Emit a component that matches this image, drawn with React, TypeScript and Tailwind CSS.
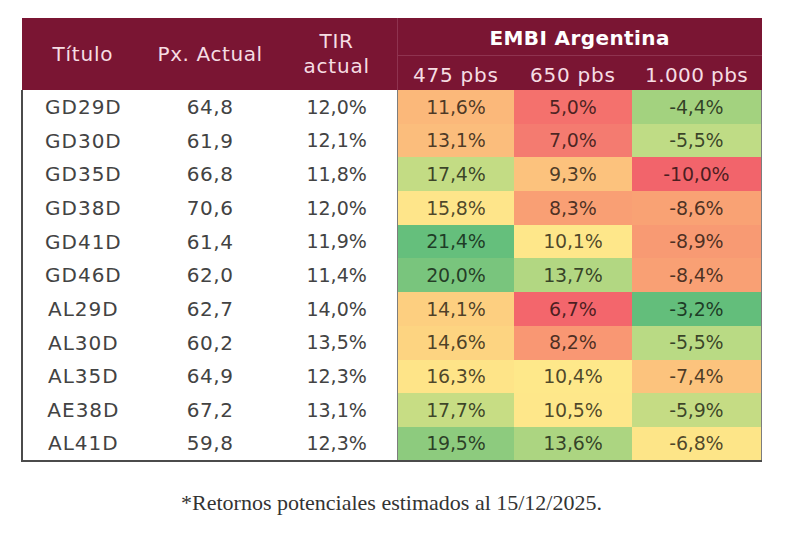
import React from 'react';

type Row = {
  ticker: string;
  px: string;
  tir: string;
  cells: [string, string][];
};

const rows: Row[] = [
  { ticker: 'GD29D', px: '64,8', tir: '12,0%', cells: [['11,6%', '#fbb87a'], ['5,0%', '#f4716d'], ['-4,4%', '#a3d27f']] },
  { ticker: 'GD30D', px: '61,9', tir: '12,1%', cells: [['13,1%', '#fbbd7c'], ['7,0%', '#f47b70'], ['-5,5%', '#bfdc85']] },
  { ticker: 'GD35D', px: '66,8', tir: '11,8%', cells: [['17,4%', '#c3dc84'], ['9,3%', '#fcc27d'], ['-10,0%', '#f2646b']] },
  { ticker: 'GD38D', px: '70,6', tir: '12,0%', cells: [['15,8%', '#fee58a'], ['8,3%', '#f99f74'], ['-8,6%', '#f9a274']] },
  { ticker: 'GD41D', px: '61,4', tir: '11,9%', cells: [['21,4%', '#65bf7c'], ['10,1%', '#fee78a'], ['-8,9%', '#f89a73']] },
  { ticker: 'GD46D', px: '62,0', tir: '11,4%', cells: [['20,0%', '#79c57d'], ['13,7%', '#b2d782'], ['-8,4%', '#f9a074']] },
  { ticker: 'AL29D', px: '62,7', tir: '14,0%', cells: [['14,1%', '#fdcf80'], ['6,7%', '#f3666c'], ['-3,2%', '#63be7b']] },
  { ticker: 'AL30D', px: '60,2', tir: '13,5%', cells: [['14,6%', '#fdd481'], ['8,2%', '#f99773'], ['-5,5%', '#b9da84']] },
  { ticker: 'AL35D', px: '64,9', tir: '12,3%', cells: [['16,3%', '#fee488'], ['10,4%', '#fee88a'], ['-7,4%', '#fcc37d']] },
  { ticker: 'AE38D', px: '67,2', tir: '13,1%', cells: [['17,7%', '#c7dd84'], ['10,5%', '#fee78a'], ['-5,9%', '#c5dc84']] },
  { ticker: 'AL41D', px: '59,8', tir: '12,3%', cells: [['19,5%', '#8dcb7e'], ['13,6%', '#acd581'], ['-6,8%', '#fde588']] },
];

export default function App() {
  return (
    <div className="min-h-[534px] w-[800px] bg-white pt-[18px]">
      <div className="ml-[21px] w-[741px]">
        <table
          className="w-full border-collapse text-[20px]"
          style={{ fontFamily: '"DejaVu Sans", "Noto Sans", sans-serif' }}
        >
          <colgroup>
            <col className="w-[122px]" />
            <col className="w-[133px]" />
            <col className="w-[121px]" />
            <col className="w-[117px]" />
            <col className="w-[118px]" />
            <col className="w-[130px]" />
          </colgroup>
          <thead className="bg-[#7a1533] text-[#f6dde3]">
            <tr className="h-[37px]">
              <th rowSpan={2} className="font-normal tracking-[0.04em]">Título</th>
              <th rowSpan={2} className="font-normal tracking-[0.03em]">Px. Actual</th>
              <th rowSpan={2} className="font-normal leading-[25px] tracking-[0.04em]">
                TIR
                <br />
                actual
              </th>
              <th colSpan={3} className="border-b border-l border-[#8f3350] pt-1 text-[20px] font-bold tracking-[0.02em] text-white">
                EMBI Argentina
              </th>
            </tr>
            <tr className="h-[35px]">
              <th className="border-l border-[#8f3350] pt-1 font-normal tracking-[0.04em]">475 pbs</th>
              <th className="pt-1 font-normal tracking-[0.04em]">650 pbs</th>
              <th className="pt-1 font-normal tracking-[0.02em]">1.000 pbs</th>
            </tr>
          </thead>
          <tbody className="border-b-2 border-[#4b4b4b]">
            {rows.map((r) => (
              <tr key={r.ticker} className="h-[33.7px] text-center">
                <td className="border-l-2 border-[#4b4b4b] tracking-[0.05em] text-[#434343]">{r.ticker}</td>
                <td className="tracking-[0.03em] text-[#434343]">{r.px}</td>
                <td className="text-[19px] text-[#434343]">{r.tir}</td>
                {r.cells.map(([v, bg], i) => (
                  <td
                    key={i}
                    className={`text-[19px] tracking-[-0.01em] text-black/70 ${i === 0 ? 'border-l border-[#7d7d7d]' : ''} ${i === 2 ? 'border-r border-[#7d7d7d]' : ''}`}
                    style={{ backgroundColor: bg }}
                  >
                    {v}
                  </td>
                ))}
              </tr>
            ))}
          </tbody>
        </table>
        <p
          className="mt-[24px] text-center text-[22px] text-[#333]"
          style={{ fontFamily: '"Liberation Serif", "DejaVu Serif", serif' }}
        >
          *Retornos potenciales estimados al 15/12/2025.
        </p>
      </div>
    </div>
  );
}
